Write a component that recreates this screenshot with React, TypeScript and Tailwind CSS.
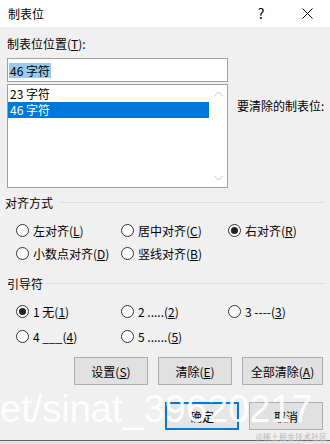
import React from "react";

const FONT = '"Noto Sans CJK SC", "Noto Sans", "Liberation Sans", sans-serif';

function Radio({ checked, children }: { checked?: boolean; children: React.ReactNode }) {
  return (
    <div className="flex items-center h-full">
      <span className="w-[13px] h-[13px] rounded-full border border-[#333] bg-white flex items-center justify-center shrink-0">
        {checked && <span className="w-[7px] h-[7px] rounded-full bg-[#222]" />}
      </span>
      <span className="ml-[4px] text-[12px] leading-[17px] text-black whitespace-nowrap">{children}</span>
    </div>
  );
}

function Btn({ children, w, primary }: { children: React.ReactNode; w: string; primary?: boolean }) {
  return (
    <div
      className={
        "h-[28px] flex items-center justify-center text-[12px] leading-[17px] text-black " +
        w +
        (primary ? " border-2 border-[#0078d7] bg-[#e5e5e5]" : " border border-[#adadad] bg-[#e1e1e1]")
      }
    >
      {children}
    </div>
  );
}

export default function App() {
  return (
    <div
      className="relative w-[330px] h-[444px] overflow-hidden bg-[#f0f0f0]"
      style={{ fontFamily: FONT }}
    >
      {/* Title bar */}
      <div className="h-[27px] bg-white flex items-center">
        <span className="pl-[8px] text-[12px] leading-[17px] text-black">制表位</span>
        <div className="ml-auto flex h-full">
          <div className="w-[46px] h-full flex items-center justify-center text-[14px] text-black">?</div>
          <div className="w-[46px] h-full flex items-center justify-center">
            <svg width="11" height="11" viewBox="0 0 11 11">
              <path d="M0.5 0.5 L10.5 10.5 M10.5 0.5 L0.5 10.5" stroke="#000" strokeWidth="1" />
            </svg>
          </div>
        </div>
      </div>

      {/* Body */}
      <div className="pl-[7px] pr-[6px] flex flex-col">
        <div className="mt-[8px] h-[17px] text-[12px] leading-[17px] text-black">
          制表位位置(<u>T</u>):
        </div>
        <div className="mt-[6px] w-[221px] h-[24px] border border-[#a0a0a0] bg-white flex items-center pl-[1px]">
          <span className="bg-[#99c9ef] text-[12px] leading-[15px] text-black px-[1px]">46 字符</span>
        </div>
        <div className="flex">
          <div className="mt-[2px] w-[221px] h-[104px] border border-[#a0a0a0] bg-white flex">
            <div className="w-[201px] pt-[1px] flex flex-col">
              <div className="h-[16px] pl-[2px] text-[12px] leading-[16px] text-black">23 字符</div>
              <div className="h-[16px] pl-[2px] text-[12px] leading-[16px] text-white bg-[#0078d7]">46 字符</div>
            </div>
            <div className="w-[18px] flex flex-col items-center justify-between py-[6px]">
              <svg width="9" height="6" viewBox="0 0 9 6">
                <path d="M0.5 5 L4.5 1 L8.5 5" stroke="#bfbfbf" fill="none" strokeWidth="1" />
              </svg>
              <svg width="9" height="6" viewBox="0 0 9 6">
                <path d="M0.5 1 L4.5 5 L8.5 1" stroke="#bfbfbf" fill="none" strokeWidth="1" />
              </svg>
            </div>
          </div>
          <div className="ml-[9px] mt-[15px] h-[17px] text-[12px] leading-[17px] text-black whitespace-nowrap">
            要清除的制表位:
          </div>
        </div>

        {/* Alignment group */}
        <div className="mt-[6px] h-[17px] flex items-center -ml-[2px]">
          <span className="text-[12px] leading-[17px] text-black whitespace-nowrap">对齐方式</span>
          <div className="ml-[7px] flex-1 h-[1px] bg-[#dcdcdc]" />
        </div>
        <div className="mt-[8px] pl-[9px] grid grid-cols-[105px_107px_1fr] grid-rows-[23px_23px]">
          <Radio>左对齐(<u>L</u>)</Radio>
          <Radio>居中对齐(<u>C</u>)</Radio>
          <Radio checked>右对齐(<u>R</u>)</Radio>
          <Radio>小数点对齐(<u>D</u>)</Radio>
          <Radio>竖线对齐(<u>B</u>)</Radio>
          <div />
        </div>

        {/* Leader group */}
        <div className="mt-[10px] h-[17px] flex items-center">
          <span className="text-[12px] leading-[17px] text-black whitespace-nowrap">引导符</span>
          <div className="ml-[3px] flex-1 h-[1px] bg-[#dcdcdc]" />
        </div>
        <div className="mt-[7px] pl-[9px] grid grid-cols-[105px_107px_1fr] grid-rows-[25px_25px]">
          <Radio checked>1 无(<u>1</u>)</Radio>
          <Radio>2 .....(<u>2</u>)</Radio>
          <Radio>3 ----(<u>3</u>)</Radio>
          <Radio>4 ___(<u>4</u>)</Radio>
          <Radio>5 ......(<u>5</u>)</Radio>
          <div />
        </div>

        {/* Buttons */}
        <div className="mt-[8px] flex justify-end gap-[10px] pr-[1px]">
          <Btn w="w-[74px]">设置(<u>S</u>)</Btn>
          <Btn w="w-[74px]">清除(<u>E</u>)</Btn>
          <Btn w="w-[81px]">全部清除(<u>A</u>)</Btn>
        </div>
        <div className="mt-[17px] flex justify-end gap-[10px] pr-[1px]">
          <Btn w="w-[74px]" primary>确定</Btn>
          <Btn w="w-[74px]">取消</Btn>
        </div>
      </div>

      {/* bottom edge */}
      <div className="absolute left-0 right-0 top-[440px] h-[1px] bg-[#666]" />
      <div className="absolute left-0 right-0 top-[441px] h-[3px] bg-[#e4e4e4]" />

      {/* Watermarks */}
      <span
        className="absolute left-[0px] top-[390px] text-[38px] leading-[38px] text-white whitespace-nowrap pointer-events-none"
        style={{ fontFamily: '"Liberation Sans", Arial, sans-serif', opacity: 0.95 }}
      >
        et/sinat_39620217
      </span>
      <span className="absolute right-[3px] top-[432px] text-[8px] leading-[10px] text-[#b8b8b8] whitespace-nowrap">
        @稀土掘金技术社区
      </span>
    </div>
  );
}
